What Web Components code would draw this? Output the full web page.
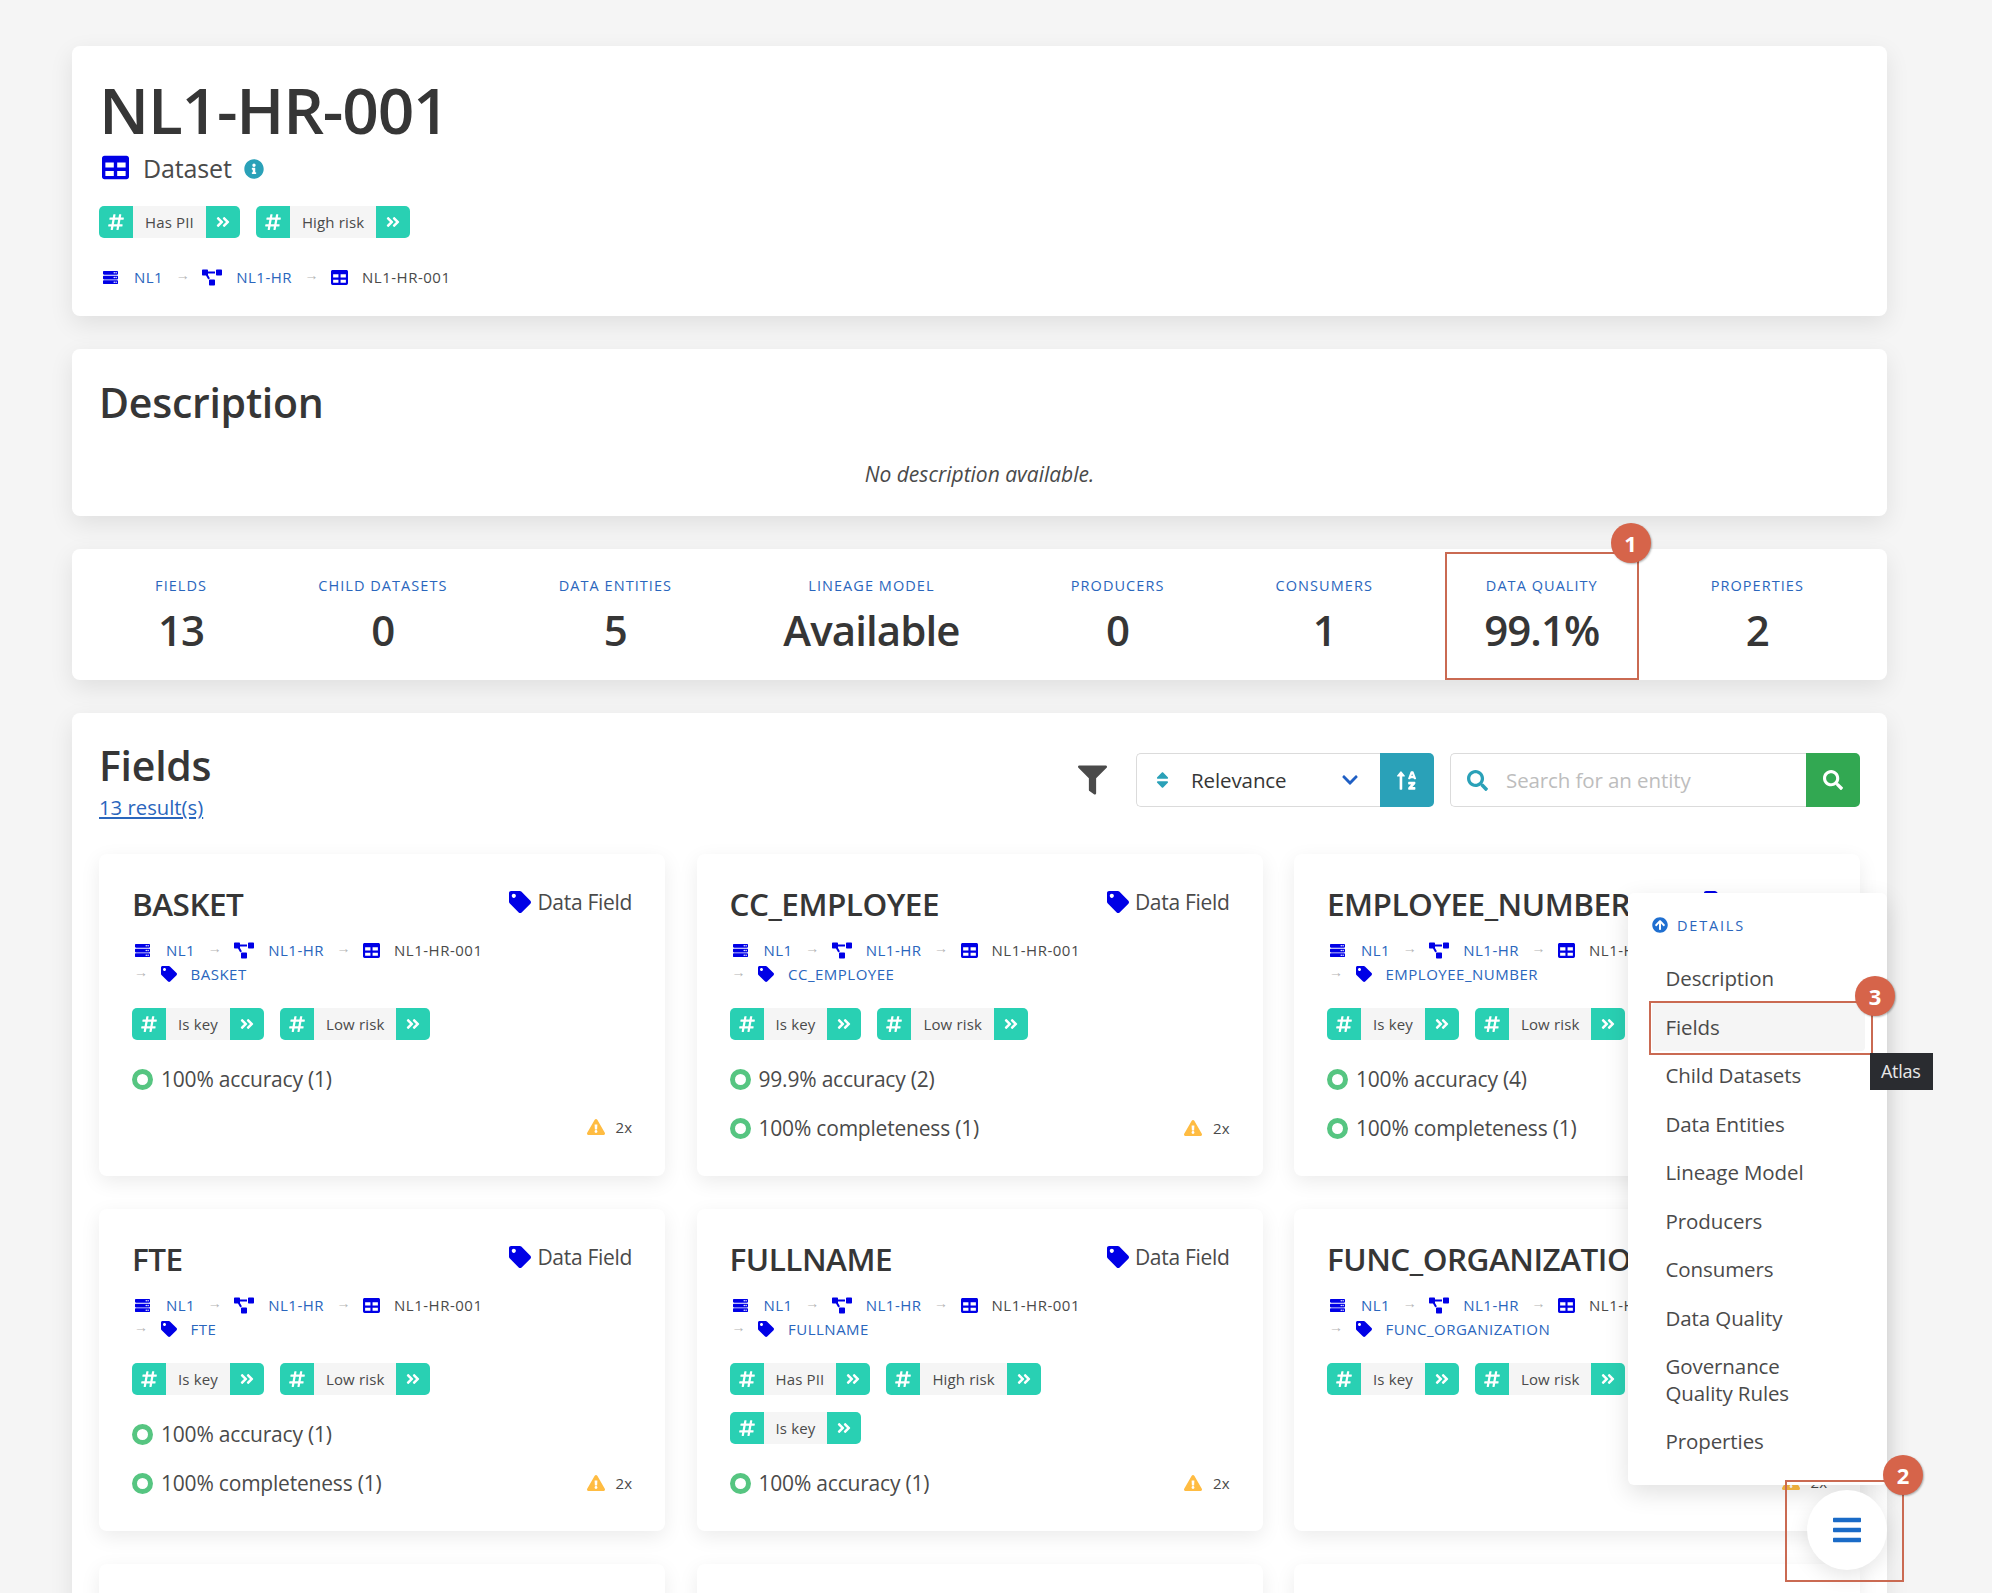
<!DOCTYPE html>
<html lang="en"><head><meta charset="utf-8"><title>NL1-HR-001</title>
<style>
html,body{margin:0;padding:0;background:#f5f5f5;height:1593px;overflow:hidden}
body{font-family:"Open Sans","Noto Sans",sans-serif;color:#4a4a4a}
</style></head><body>
<app-page>
  <info-panel style="height:270px;padding:24px 27px 0 27px">
    <page-title>NL1-HR-001</page-title>
    <type-line>Dataset</type-line>
    <tag-list style="margin-top:21px"><tag-pill>Has PII</tag-pill><tag-pill>High risk</tag-pill></tag-list>
    <crumb-trail style="margin-top:27px;padding-left:3px"><crumb-item icon="server" link first>NL1</crumb-item><crumb-item icon="diagram" link>NL1-HR</crumb-item><crumb-item icon="table">NL1-HR-001</crumb-item></crumb-trail>
  </info-panel>
  <info-panel style="height:167px;padding:28px 27px 0 27px">
    <section-head>Description</section-head>
    <empty-note>No description available.</empty-note>
  </info-panel>
  <stat-bar>
    <stat-item label="FIELDS">13</stat-item>
    <stat-item label="CHILD DATASETS">0</stat-item>
    <stat-item label="DATA ENTITIES">5</stat-item>
    <stat-item label="LINEAGE MODEL">Available</stat-item>
    <stat-item label="PRODUCERS">0</stat-item>
    <stat-item label="CONSUMERS">1</stat-item>
    <stat-item label="DATA QUALITY" marked>99.1%</stat-item>
    <stat-item label="PROPERTIES">2</stat-item>
  </stat-bar>
  <info-panel style="padding:27px 27px 60px 27px">
    <fields-head></fields-head>
    <card-grid>
      <field-card name="BASKET" warn>
        <tag-pill slot="tags">Is key</tag-pill><tag-pill slot="tags">Low risk</tag-pill>
        <quality-row slot="quality">100% accuracy (1)</quality-row>
      </field-card>
      <field-card name="CC_EMPLOYEE" warn>
        <tag-pill slot="tags">Is key</tag-pill><tag-pill slot="tags">Low risk</tag-pill>
        <quality-row slot="quality">99.9% accuracy (2)</quality-row><quality-row slot="quality">100% completeness (1)</quality-row>
      </field-card>
      <field-card name="EMPLOYEE_NUMBER" warn>
        <tag-pill slot="tags">Is key</tag-pill><tag-pill slot="tags">Low risk</tag-pill>
        <quality-row slot="quality">100% accuracy (4)</quality-row><quality-row slot="quality">100% completeness (1)</quality-row>
      </field-card>
      <field-card name="FTE" warn>
        <tag-pill slot="tags">Is key</tag-pill><tag-pill slot="tags">Low risk</tag-pill>
        <quality-row slot="quality">100% accuracy (1)</quality-row><quality-row slot="quality">100% completeness (1)</quality-row>
      </field-card>
      <field-card name="FULLNAME" warn>
        <tag-pill slot="tags">Has PII</tag-pill><tag-pill slot="tags">High risk</tag-pill><tag-pill slot="tags">Is key</tag-pill>
        <quality-row slot="quality">100% accuracy (1)</quality-row>
      </field-card>
      <field-card name="FUNC_ORGANIZATION" warn>
        <tag-pill slot="tags">Is key</tag-pill><tag-pill slot="tags">Low risk</tag-pill>
      </field-card>
      <blank-card></blank-card><blank-card></blank-card><blank-card></blank-card>
    </card-grid>
  </info-panel>
  <details-menu></details-menu>
  <menu-fab></menu-fab>
</app-page>
<script>
const P={
table:[512,"M464 32H48C21.49 32 0 53.49 0 80v352c0 26.51 21.49 48 48 48h416c26.51 0 48-21.49 48-48V80c0-26.51-21.49-48-48-48zM224 416H64v-96h160v96zm0-160H64v-96h160v96zm224 160H288v-96h160v96zm0-160H288v-96h160v96z"],
server:[512,"M32 32h448c18 0 32 14 32 32v64c0 18-14 32-32 32H32c-18 0-32-14-32-32V64c0-18 14-32 32-32zm392 64a24 24 0 1 0 48 0 24 24 0 1 0-48 0zm-64 0a24 24 0 1 0 48 0 24 24 0 1 0-48 0zM32 192h448c18 0 32 14 32 32v64c0 18-14 32-32 32H32c-18 0-32-14-32-32v-64c0-18 14-32 32-32zm392 64a24 24 0 1 0 48 0 24 24 0 1 0-48 0zm-64 0a24 24 0 1 0 48 0 24 24 0 1 0-48 0zM32 352h448c18 0 32 14 32 32v64c0 18-14 32-32 32H32c-18 0-32-14-32-32v-64c0-18 14-32 32-32zm392 64a24 24 0 1 0 48 0 24 24 0 1 0-48 0zm-64 0a24 24 0 1 0 48 0 24 24 0 1 0-48 0z"],
diagram:[640,"M384 320H256c-17.67 0-32 14.33-32 32v128c0 17.67 14.33 32 32 32h128c17.67 0 32-14.33 32-32V352c0-17.67-14.33-32-32-32zM192 32c0-17.67-14.33-32-32-32H32C14.33 0 0 14.33 0 32v128c0 17.67 14.33 32 32 32h95.72l73.16 128.04C211.98 300.98 232.4 288 256 288h.28L192 175.51V128h224V64H192V32zM608 0H480c-17.67 0-32 14.33-32 32v128c0 17.67 14.33 32 32 32h128c17.67 0 32-14.33 32-32V32c0-17.67-14.33-32-32-32z"],
tag:[512,"M0 252.118V48C0 21.49 21.49 0 48 0h204.118a48 48 0 0 1 33.941 14.059l211.882 211.882c18.745 18.745 18.745 49.137 0 67.882L293.823 497.941c-18.745 18.745-49.137 18.745-67.882 0L14.059 286.059A48 48 0 0 1 0 252.118zM112 64c-26.51 0-48 21.49-48 48s21.49 48 48 48 48-21.49 48-48-21.49-48-48-48z"],
hash:[448,"M440.667 182.109l7.143-40c1.313-7.355-4.342-14.109-11.813-14.109h-74.81l14.623-81.891C377.123 38.754 371.468 32 363.997 32h-40.632a12 12 0 0 0-11.813 9.891L296.175 128H197.54l14.623-81.891C213.477 38.754 207.822 32 200.35 32h-40.632a12 12 0 0 0-11.813 9.891L132.528 128H53.432a12 12 0 0 0-11.813 9.891l-7.143 40C33.163 185.246 38.818 192 46.289 192h74.81L98.242 320H19.146a12 12 0 0 0-11.813 9.891l-7.143 40C-1.123 377.246 4.532 384 12.003 384h74.81L72.19 465.891C70.877 473.246 76.532 480 84.003 480h40.632a12 12 0 0 0 11.813-9.891L151.826 384h98.634l-14.623 81.891C234.523 473.246 240.178 480 247.65 480h40.632a12 12 0 0 0 11.813-9.891L315.472 384h79.096a12 12 0 0 0 11.813-9.891l7.143-40c1.313-7.355-4.342-14.109-11.813-14.109h-74.81l22.857-128h79.096a12 12 0 0 0 11.813-9.891zM261.889 320h-98.634l22.857-128h98.634l-22.857 128z"],
dbl:[448,"M224.3 273l-136 136c-9.4 9.4-24.6 9.4-33.9 0l-22.6-22.6c-9.4-9.4-9.4-24.6 0-33.9l96.4-96.4-96.4-96.4c-9.4-9.4-9.4-24.6 0-33.9L54.3 103c9.4-9.4 24.6-9.4 33.9 0l136 136c9.5 9.4 9.5 24.6.1 34zm192-34l-136-136c-9.4-9.4-24.6-9.4-33.9 0l-22.6 22.6c-9.4 9.4-9.4 24.6 0 33.9l96.4 96.4-96.4 96.4c-9.4 9.4-9.4 24.6 0 33.9l22.6 22.6c9.4 9.4 24.6 9.4 33.9 0l136-136c9.4-9.2 9.4-24.4 0-33.8z"],
info:[512,"M256 8C119.043 8 8 119.083 8 256c0 136.997 111.043 248 248 248s248-111.003 248-248C504 119.083 392.957 8 256 8zm0 110c23.196 0 42 18.804 42 42s-18.804 42-42 42-42-18.804-42-42 18.804-42 42-42zm56 254c0 6.627-5.373 12-12 12h-88c-6.627 0-12-5.373-12-12v-24c0-6.627 5.373-12 12-12h12v-64h-12c-6.627 0-12-5.373-12-12v-24c0-6.627 5.373-12 12-12h64c6.627 0 12 5.373 12 12v100h12c6.627 0 12 5.373 12 12v24z"],
filter:[512,"M487.976 0H24.028C2.71 0-8.047 25.866 7.058 40.971L192 225.941V432c0 7.831 3.821 15.17 10.237 19.662l80 55.98C298.02 518.69 320 507.493 320 487.98V225.941l184.947-184.97C520.021 25.896 509.338 0 487.976 0z"],
sort:[320,"M41 288h238c21.4 0 32.1 25.9 17 41L177 448c-9.4 9.4-24.6 9.4-33.9 0L24 329c-15.1-15.1-4.4-41 17-41zm255-105L177 64c-9.4-9.4-24.6-9.4-33.9 0L24 183c-15.1 15.1-4.4 41 17 41h238c21.4 0 32.1-25.9 17-41z"],
chev:[448,"M207.029 381.476L12.686 187.132c-9.373-9.373-9.373-24.569 0-33.941l22.667-22.667c9.357-9.357 24.522-9.375 33.901-.04L224 284.505l154.745-154.021c9.379-9.335 24.544-9.317 33.901.04l22.667 22.667c9.373 9.373 9.373 24.569 0 33.941L240.971 381.476c-9.373 9.372-24.569 9.372-33.942 0z"],
search:[512,"M505 442.7L405.3 343c-4.5-4.5-10.6-7-17-7H372c27.6-35.3 44-79.7 44-128C416 93.1 322.9 0 208 0S0 93.1 0 208s93.1 208 208 208c48.3 0 92.7-16.4 128-44v16.3c0 6.4 2.5 12.5 7 17l99.7 99.7c9.4 9.4 24.6 9.4 33.9 0l28.3-28.3c9.4-9.4 9.4-24.6.1-34zM208 336c-70.7 0-128-57.2-128-128 0-70.7 57.2-128 128-128 70.7 0 128 57.2 128 128 0 70.7-57.2 128-128 128z"],
sortaz:[512,"M16 160h48v304a16 16 0 0 0 16 16h32a16 16 0 0 0 16-16V160h48c14.21 0 21.39-17.24 11.31-27.31l-80-96a16 16 0 0 0-22.62 0l-80 96C-5.35 142.74 1.78 160 16 160zm416 128H288a16 16 0 0 0-16 16v32a16 16 0 0 0 16 16h56l-61.26 70.45A32 32 0 0 0 272 446.37V464a16 16 0 0 0 16 16h144a16 16 0 0 0 16-16v-32a16 16 0 0 0-16-16h-56l61.26-70.45A32 32 0 0 0 448 321.63V304a16 16 0 0 0-16-16zm31.06-85.38l-59.27-160A16 16 0 0 0 388.8 32h-41.6a16 16 0 0 0-15 10.62l-59.27 160A16 16 0 0 0 288 224h24.83a16 16 0 0 0 15.23-11.08l4.42-12.92h71l4.42 12.92A16 16 0 0 0 423.17 224H448a16 16 0 0 0 15.06-21.38zM350.91 144L368 96l17.09 48z"],
warn:[576,"M569.517 440.013C587.975 472.007 564.806 512 527.94 512H48.054c-36.937 0-59.999-40.055-41.577-71.987L246.423 23.985c18.467-32.009 64.72-31.951 83.154 0l239.94 416.028zM288 354c-25.405 0-46 20.595-46 46s20.595 46 46 46 46-20.595 46-46-20.595-46-46-46zm-43.673-165.346l7.418 136c.347 6.364 5.609 11.346 11.982 11.346h48.546c6.373 0 11.635-4.982 11.982-11.346l7.418-136c.375-6.874-5.098-12.654-11.982-12.654h-63.383c-6.884 0-12.356 5.78-11.981 12.654z"],
up:[512,"M8 256C8 119 119 8 256 8s248 111 248 248-111 248-248 248S8 393 8 256zm143.6 28.9l72.4-75.5V392c0 13.3 10.7 24 24 24h16c13.3 0 24-10.7 24-24V209.4l72.4 75.5c9.3 9.7 24.8 9.9 34.3.4l10.9-11c9.4-9.4 9.4-24.6 0-33.9L273 107.7c-9.4-9.4-24.6-9.4-33.9 0L106.3 240.4c-9.4 9.4-9.4 24.6 0 33.9l10.9 11c9.6 9.5 25.1 9.3 34.4-.4z"],
bars:[448,"M16 132h416c8.837 0 16-7.163 16-16V76c0-8.837-7.163-16-16-16H16C7.163 60 0 67.163 0 76v40c0 8.837 7.163 16 16 16zm0 160h416c8.837 0 16-7.163 16-16v-40c0-8.837-7.163-16-16-16H16c-8.837 0-16 7.163-16 16v40c0 8.837 7.163 16 16 16zm0 160h416c8.837 0 16-7.163 16-16v-40c0-8.837-7.163-16-16-16H16c-8.837 0-16 7.163-16 16v40c0 8.837 7.163 16 16 16z"]
};
const ICO_EVEN={server:1};
function svg(n,w,h,c,extra){const p=P[n];const vh=512;h=h||w;return `<svg xmlns="http://www.w3.org/2000/svg" width="${w}" height="${h}" viewBox="0 0 ${p[0]} ${vh}" fill="${c||'currentColor'}" style="display:block;flex:none;${extra||''}"><path fill-rule="${ICO_EVEN[n]?'evenodd':'nonzero'}" d="${p[1]}"/></svg>`}
function def(tag,html){customElements.define(tag,class extends HTMLElement{
  connectedCallback(){if(this.shadowRoot)return;const r=this.attachShadow({mode:"open"});r.innerHTML=typeof html==="function"?html(this):html;}
})}
const FS='"Open Sans","Noto Sans",sans-serif';
def("app-page",`<style>:host{display:flex;flex-direction:column;gap:33px;position:relative;box-sizing:border-box;width:1992px;height:1593px;padding:46px 105px 0 72px;overflow:hidden;font-family:${FS}}</style><slot></slot>`);
def("info-panel",`<style>:host{display:block;box-sizing:border-box;flex:none;background:#fff;border-radius:8px;box-shadow:0 8px 24px rgba(0,0,0,.09)}</style><slot></slot>`);
def("page-title",`<style>:host{display:block;font-size:64px;line-height:80px;font-weight:600;color:#363636;letter-spacing:-1.2px;margin-left:0}</style><slot></slot>`);
def("type-line",()=>`<style>:host{display:flex;align-items:center;height:35px;margin-left:3px;font-size:25px;letter-spacing:-.15px;color:#4a4a4a}
 span{margin:0 12px 0 14px}</style>${svg("table",27,27,"#0000e6")}<span><slot></slot></span>${svg("info",20,20,"#2aa1b8","margin-top:3px")}`);
def("tag-list",`<style>:host{display:flex;flex-wrap:wrap;gap:17px 16px}</style><slot></slot>`);
def("tag-pill",()=>`<style>:host{display:inline-flex;height:32px;font-size:15px;color:#4a4a4a;letter-spacing:.15px}
 div{display:flex;align-items:center;justify-content:center;width:34px;background:#29d0b3;color:#fff}
 .a{border-radius:5px 0 0 5px}.c{border-radius:0 5px 5px 0}
 span{display:flex;align-items:center;background:#f5f5f5;padding:0 12px}</style><div class="a">${svg("hash",16,18)}</div><span><slot></slot></span><div class="c">${svg("dbl",16,16)}</div>`);
def("crumb-trail",`<style>:host{display:flex;flex-wrap:wrap;align-items:center;line-height:24px}</style><slot></slot>`);
def("crumb-item",h=>{const ic=h.getAttribute("icon");const w=ic==="diagram"?20:ic==="server"?17:ic==="table"?17:16;
 const arrow=h.hasAttribute("first")?"":`<b>→</b>`;
 return `<style>:host{display:inline-flex;align-items:center;white-space:nowrap;height:24px;font-size:15px;letter-spacing:.5px;margin-right:12.5px;color:${h.hasAttribute("link")?"#2a66bd":"#4a4a4a"}}
 b{font:400 14px "Liberation Sans",sans-serif;letter-spacing:0;color:#b5b5b5;margin-right:12.5px;margin-top:-4px}
 span{margin-left:${ic==="diagram"?14:ic==="server"?15:14}px}</style>${arrow}${svg(ic,w,ic==="diagram"?17:ic==="server"?15:w,"#0000e6")}<span><slot></slot></span>`});
def("section-head",`<style>:host{display:block;font-size:41px;line-height:50px;font-weight:600;color:#363636;letter-spacing:-.25px}</style><slot></slot>`);
def("empty-note",`<style>:host{display:block;text-align:center;font-style:italic;font-size:21px;line-height:27px;margin-top:34px;letter-spacing:0;color:#4a4a4a}</style><slot></slot>`);
def("stat-bar",`<style>:host{display:flex;flex:none;box-sizing:border-box;height:131px;gap:33px;padding:0 44px 0 44px;background:#fff;border-radius:8px;box-shadow:0 8px 24px rgba(0,0,0,.09)}</style><slot></slot>`);
def("stat-item",h=>`<style>:host{display:block;position:relative;flex:1 1 auto;text-align:center;padding-top:27px}
 .l{font-size:14.5px;line-height:20px;color:#2a66bd;letter-spacing:1.05px}
 .v{font-size:42px;line-height:50px;margin-top:9px;font-weight:600;color:#363636;letter-spacing:-.9px}</style>
 <div class="l">${h.getAttribute("label")}</div><div class="v"><slot></slot></div>${h.hasAttribute("marked")?'<anno-box n="1" style="inset:3px 0 0 0;--bx:-14px;--by:-31px"></anno-box>':''}`);
def("anno-box",h=>`<style>:host{display:block;position:absolute;box-sizing:border-box;border:2px solid #ca6a52;pointer-events:none;z-index:5}
 div{position:absolute;right:var(--bx);top:var(--by);width:40px;height:40px;border-radius:50%;background:#d6644a;color:#fff;font-weight:700;font-size:22px;line-height:40px;text-align:center;box-shadow:1px 1px 2px rgba(0,0,0,.3)}</style><div>${h.getAttribute("n")}</div>`);
def("fields-head",()=>`<style>:host{display:flex;justify-content:space-between;height:114px}
 h2{margin:0;font-size:41px;line-height:50px;font-weight:600;color:#363636;letter-spacing:-.25px}
 a{display:block;font-size:20.3px;line-height:24px;margin-top:5px;color:#2a66bd;text-decoration:underline;letter-spacing:0}
 .r{display:flex;align-items:flex-start;padding-top:13px}
 .f{margin:12px 29px 0 0;color:#4a4a4a}
 .sel{box-sizing:border-box;width:244px;height:54px;display:flex;align-items:center;border:1px solid #dbdbdb;border-right:0;border-radius:5px 0 0 5px;padding-left:19px;font-size:20.5px;letter-spacing:-.1px;color:#363636}
 .sel span{margin-left:22px;flex:1}
 .b{width:54px;height:54px;display:flex;align-items:center;justify-content:center;color:#fff}
 .inp{box-sizing:border-box;width:356px;height:54px;margin-left:16px;display:flex;align-items:center;border:1px solid #dbdbdb;border-right:0;border-radius:5px 0 0 5px;padding-left:16px;font-size:20.5px;color:#bdbdbd;letter-spacing:-.1px}
 .inp span{margin-left:18px}</style>
 <div><h2>Fields</h2><a>13 result(s)</a></div>
 <div class="r"><div class="f">${svg("filter",29,30)}</div>
 <div class="sel">${svg("sort",13,20,"#2aa1b8")}<span>Relevance</span>${svg("chev",18,18,"#1f5fc4","margin-right:21px")}</div>
 <div class="b" style="background:#2aa1b8;border-radius:0 5px 5px 0">${svg("sortaz",21,21)}</div>
 <div class="inp">${svg("search",21,21,"#2aa1b8")}<span>Search for an entity</span></div>
 <div class="b" style="background:#32a852;border-radius:0 5px 5px 0">${svg("search",20,20)}</div></div>`);
def("card-grid",`<style>:host{display:grid;grid-template-columns:repeat(3,1fr);column-gap:31.5px;row-gap:33px;grid-auto-rows:322px}</style><slot></slot>`);
def("blank-card",`<style>:host{display:block;background:#fff;border-radius:8px;box-shadow:0 6px 20px rgba(0,0,0,.08)}</style>`);
def("field-card",h=>{const n=h.getAttribute("name");return `<style>:host{display:flex;flex-direction:column;box-sizing:border-box;padding:28px 33px 33px;background:#fff;border-radius:8px;box-shadow:0 6px 20px rgba(0,0,0,.08);min-width:0}
 .t{display:flex;justify-content:space-between;align-items:flex-start;height:44px}
 h3{margin:0;flex:1;min-width:0;overflow:hidden;font-size:31.5px;line-height:44px;font-weight:600;color:#363636;letter-spacing:-.5px;white-space:nowrap}
 .k{display:flex;align-items:center;gap:6px;flex:none;font-size:21px;line-height:40px;letter-spacing:-.3px;color:#4a4a4a}
 crumb-trail{margin-top:12px;min-height:48px;max-width:400px;padding-left:2px}
 tag-list{margin-top:22px;max-width:400px}
 .b{flex:1;display:flex;justify-content:space-between;align-items:flex-end;margin-top:23px}
 .q{display:flex;flex-direction:column;gap:17px;align-self:flex-start}
 .w{display:flex;align-items:center;height:32px;gap:11px;font-size:15px}</style>
 <div class="t"><h3>${n}</h3><div class="k">${svg("tag",22,22,"#0000e6")}<span>Data Field</span></div></div>
 <crumb-trail><crumb-item icon="server" link first>NL1</crumb-item><crumb-item icon="diagram" link>NL1-HR</crumb-item><crumb-item icon="table">NL1-HR-001</crumb-item><crumb-item icon="tag" link>${n}</crumb-item></crumb-trail>
 <tag-list><slot name="tags"></slot></tag-list>
 <div class="b"><div class="q"><slot name="quality"></slot></div>${h.hasAttribute("warn")?`<div class="w">${svg("warn",18,18,"#ffbc42")}<span>2x</span></div>`:""}</div>`});
def("quality-row",`<style>:host{display:flex;align-items:center;height:32px;font-size:21px;letter-spacing:-.2px;color:#4a4a4a}
 i{display:block;box-sizing:border-box;width:21px;height:21px;border:5.5px solid #56c581;border-radius:50%;margin-right:8px}</style><i></i><slot></slot>`);
def("details-menu",()=>{const it=["Description","Fields","Child Datasets","Data Entities","Lineage Model","Producers","Consumers","Data Quality","Governance<br>Quality Rules","Properties"];
 return `<style>:host{display:block;position:absolute;left:1628px;top:893px;width:259px;height:592px;box-sizing:border-box;background:#fff;border-radius:6px;box-shadow:0 8px 24px rgba(0,0,0,.12);padding:20px 22px 0 24px;z-index:3}
 .d{display:flex;align-items:center;gap:9px;height:24px;font-size:14.5px;letter-spacing:1.8px;color:#2a66bd;margin-bottom:17px}
 ul{list-style:none;margin:0;padding:0;display:flex;flex-direction:column}
 li{position:relative;padding:11px 13.5px;font-size:20.5px;line-height:26.55px;letter-spacing:-.1px;color:#4a4a4a;border-radius:4px}
 li.on{background:#f5f5f5}</style>
 <div class="d">${svg("up",16,16,"#1f6fd0")}<span>DETAILS</span></div>
 <ul>${it.map((t,i)=>`<li class="${i==1?'on':''}">${t}${i==1?'<anno-box n="3" style="left:-3px;top:-2px;right:-8px;bottom:-4px;--bx:-24px;--by:-27px"></anno-box><atlas-tip></atlas-tip>':''}</li>`).join("")}</ul>`});
def("atlas-tip",`<style>:host{position:absolute;left:218px;top:50px;display:block;background:#2a2c30;color:#e8e8e8;font-size:18px;line-height:37px;padding:0 13px 0 11px;letter-spacing:-.3px;z-index:6}</style>Atlas`);
def("menu-fab",()=>`<style>:host{display:block;position:absolute;left:1807px;top:1490px;width:80px;height:80px;border-radius:50%;background:#fff;box-shadow:0 6px 20px rgba(0,0,0,.1);z-index:4}
 div{display:flex;align-items:center;justify-content:center;height:100%}</style><div>${svg("bars",28,32,"#1a6bc7")}</div><anno-box n="2" style="left:-22px;top:-10px;width:119px;height:102px;--bx:-21px;--by:-27px"></anno-box>`);
</script>
</body></html>
